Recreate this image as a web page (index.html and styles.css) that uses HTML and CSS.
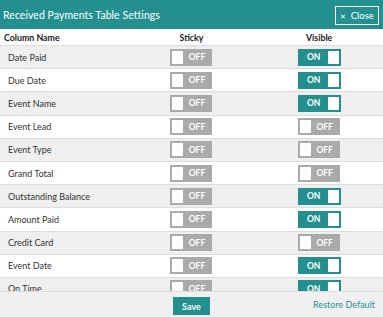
FILE: index.html
```html
<!DOCTYPE html>
<html lang="en">
<head>
    <meta charset="UTF-8">
    <meta name="viewport" content="width=device-width, initial-scale=1.0">
    <title>Received Payments Table Settings</title>
    <link rel="stylesheet" href="styles.css">
</head>
<body>
    <div class="modal">
        <div class="modal-header">
            <h1>Received Payments Table Settings</h1>
            <button class="close-button"><span class="close-x">&#10005;</span> Close</button>
        </div>
        <div class="table-head">
            <div class="col-name">Column Name</div>
            <div class="col-center">Sticky</div>
            <div class="col-center">Visible</div>
        </div>
        <div id="table-body" class="table-body"></div>
        <div class="modal-footer">
            <div></div>
            <div class="col-center"><button class="save-button">Save</button></div>
            <div class="restore"><a href="#">Restore Default</a></div>
        </div>
    </div>

    <script>
        // Columns and their settings
        const columns = [
            { name: 'Date Paid', sticky: false, visible: true },
            { name: 'Due Date', sticky: false, visible: true },
            { name: 'Event Name', sticky: false, visible: true },
            { name: 'Event Lead', sticky: false, visible: false },
            { name: 'Event Type', sticky: false, visible: false },
            { name: 'Grand Total', sticky: false, visible: false },
            { name: 'Outstanding Balance', sticky: false, visible: true },
            { name: 'Amount Paid', sticky: false, visible: true },
            { name: 'Credit Card', sticky: false, visible: false },
            { name: 'Event Date', sticky: false, visible: true },
            { name: 'On Time', sticky: false, visible: true }
        ];

        function toggleHtml(on) {
            if (on) {
                return '<span class="toggle on"><span class="toggle-label">ON</span><span class="knob"></span></span>';
            }
            return '<span class="toggle"><span class="knob"></span><span class="toggle-label">OFF</span></span>';
        }

        // Build the rows
        const body = document.getElementById('table-body');
        columns.forEach((col, i) => {
            const row = document.createElement('div');
            row.className = i % 2 === 0 ? 'row row-alt' : 'row';
            row.innerHTML = `
                <div class="col-name">${col.name}</div>
                <div class="col-center">${toggleHtml(col.sticky)}</div>
                <div class="col-center">${toggleHtml(col.visible)}</div>
            `;
            body.appendChild(row);
        });
    </script>
</body>
</html>
```

FILE: styles.css
```css
body {
    margin: 0;
    padding: 0;
    font-family: Lato, "Open Sans", Arial, sans-serif;
    color: #333;
}
.modal {
    width: 383px;
    height: 317px;
    display: flex;
    flex-direction: column;
    overflow: hidden;
    background-color: #fff;
}
.modal-header {
    height: 29px;
    flex: none;
    background-color: #23908f;
    color: #fff;
    display: flex;
    align-items: center;
    justify-content: space-between;
    padding: 0 4px 0 3px;
    box-sizing: border-box;
}
.modal-header h1 {
    margin: 0;
    font-size: 10.5px;
    font-weight: normal;
    letter-spacing: 0.05px;
}
.close-button {
    height: 19px;
    width: 44px;
    margin-top: 2px;
    padding: 0;
    background: transparent;
    color: #fff;
    border: 1px solid #fff;
    font-family: inherit;
    font-size: 9.5px;
    cursor: pointer;
}
.close-x {
    font-size: 7px;
    margin-right: 2px;
}
.table-head,
.row,
.modal-footer {
    display: grid;
    grid-template-columns: 1fr 1fr 1fr;
    align-items: center;
}
.table-head {
    height: 17px;
    flex: none;
    font-size: 8.8px;
    font-weight: bold;
    border-bottom: 1px solid #ddd;
    box-sizing: border-box;
    color: #222;
}
.table-head .col-name {
    padding-left: 4px;
}
.col-center {
    text-align: center;
}
.table-body {
    flex: 1;
    overflow: hidden;
}
.row {
    height: 23.2px;
    box-sizing: border-box;
    border-bottom: 1px solid #ddd;
    font-size: 9px;
}
.row .col-name {
    padding-left: 8px;
}
.row-alt {
    background-color: #efefef;
}
.toggle {
    display: inline-flex;
    align-items: center;
    width: 42px;
    height: 17px;
    box-sizing: border-box;
    border: 2px solid #aaa;
    background-color: #aaa;
    vertical-align: middle;
}
.toggle .knob {
    width: 11px;
    height: 13px;
    background-color: #fff;
}
.toggle .toggle-label {
    flex: 1;
    color: #fff;
    font-size: 8.5px;
    font-weight: bold;
    text-align: center;
}
.toggle.on {
    width: 43px;
    border-color: #23908f;
    background-color: #23908f;
}
.modal-footer {
    height: 26px;
    flex: none;
    background-color: #f0f0f0;
    border-top: 1px solid #ddd;
    box-sizing: border-box;
}
.save-button {
    width: 37px;
    height: 18px;
    padding: 0;
    background-color: #23908f;
    color: #fff;
    border: none;
    font-family: inherit;
    font-size: 9px;
    font-weight: bold;
    cursor: pointer;
}
.restore {
    text-align: right;
    padding-right: 8px;
    font-size: 9px;
}
.restore a {
    color: #23908f;
    text-decoration: none;
}
```
